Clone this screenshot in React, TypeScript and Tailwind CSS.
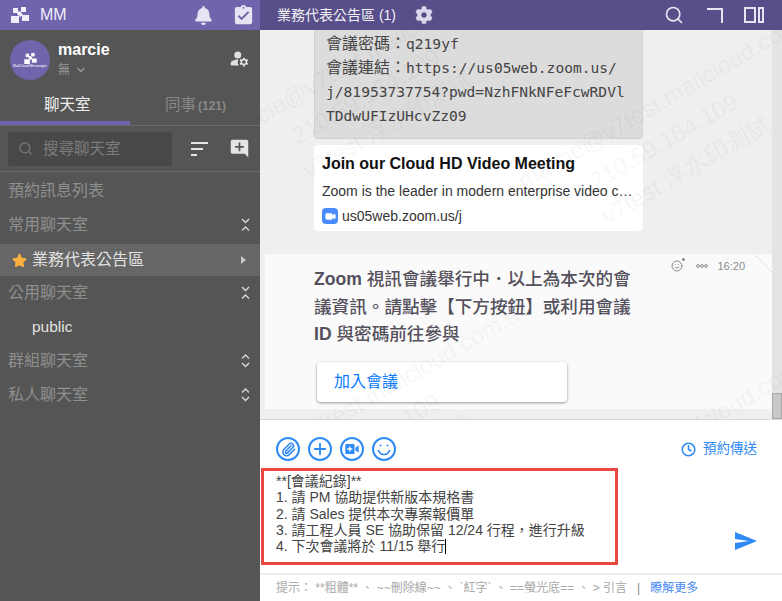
import { Search, Plus, Paperclip, Video, ChevronDown, Clock, Smile } from "lucide-react";
import { FaBell, FaCog, FaStar } from "react-icons/fa";
import { MdAddComment, MdAssignmentTurnedIn, MdManageAccounts } from "react-icons/md";

const Logo = ({ className }: { className: string }) => (
  <svg viewBox="0 0 18 16" className={className} fill="currentColor">
    <rect x="0" y="9" width="8" height="7" />
    <rect x="11" y="8" width="7" height="6" />
    <rect x="2" y="1" width="5" height="5" />
    <rect x="10" y="0" width="5" height="5" />
    <path d="M6 5l3-1 3 4-3 2-3-3z" />
  </svg>
);

const Watermark = ({ className }: { className: string }) => (
  <div
    className={`pointer-events-none absolute origin-[0_18px] -rotate-[30deg] whitespace-nowrap text-[24px] leading-[36px] text-black/[0.05] ${className}`}
  >
    <div>marcie@v7test.mailcloud.com.tw</div>
    <div className="pl-[62px]">210.59.164.109</div>
    <div className="pl-[55px]">v7test 浮水印測試</div>
  </div>
);

const Section = ({ title, open }: { title: string; open?: boolean }) => (
  <div className="flex h-[34px] items-center justify-between pl-2 pr-[10px] text-[16px] text-[#8f8f8f]">
    <span>{title}</span>
    <svg viewBox="0 0 9 14" className="h-[14px] w-[9px] text-[#d8d8d8]" fill="none" stroke="currentColor" strokeWidth="1.4">
      <path d={open ? "M1 1l3.5 3.5L8 1M1 12.5L4.5 9 8 12.5" : "M1 4.5L4.5 1 8 4.5M1 9l3.5 3.5L8 9"} />
    </svg>
  </div>
);

const Sidebar = () => (
  <aside className="flex w-[260px] shrink-0 flex-col bg-[#555555]">
    <div className="flex h-[30px] items-center justify-between bg-[#7064ad] pl-[11px] pr-[5px]">
      <div className="flex items-center gap-[11px] text-[#f0eef8]">
        <Logo className="h-[16px] w-[18px]" />
        <span className="text-[16px] font-medium">MM</span>
      </div>
      <div className="flex items-center gap-[19px] text-[#e6e3f2]">
        <FaBell className="size-[19px]" />
        <MdAssignmentTurnedIn className="size-[23px]" />
      </div>
    </div>

    <div className="flex h-[60px] items-start pl-[10px] pr-[10px] pt-[10px]">
      <div className="flex size-[40px] flex-col items-center justify-center rounded-full bg-[#7064ad] text-white">
        <Logo className="mt-[2px] h-[11px] w-[13px]" />
        <span className="mt-[1px] text-[3.5px] leading-none">MailCloud Messenger</span>
      </div>
      <div className="ml-[8px] flex-1">
        <div className="text-[16px] font-bold leading-[20px] text-white">marcie</div>
        <div className="mt-[2px] flex items-center gap-[5px] text-[12px] leading-[16px] text-[#9a9a9a]">
          無 <ChevronDown className="size-[12px]" strokeWidth={2.5} />
        </div>
      </div>
      <MdManageAccounts className="mt-[8px] size-[21px] text-[#e0e0e0]" />
    </div>

    <div className="flex h-[36px] border-b border-[#6a6a6a]">
      <div className="w-[130px] border-b-[4px] border-[#7064ad] pl-[44px] pt-[3px] text-[15.5px] leading-[24px] text-[#eeeeee]">
        聊天室
      </div>
      <div className="pl-[35px] pt-[3px] text-[15.5px] leading-[24px] text-[#888888]">
        同事<span className="ml-[2px] text-[12px] font-bold">(121)</span>
      </div>
    </div>

    <div className="flex h-[46px] items-center border-b border-[#6a6a6a] pl-2">
      <div className="flex h-[34px] w-[164px] items-center gap-[10px] rounded-[3px] bg-[#484848] pl-[10px] text-[15.5px] text-[#7b7b7b]">
        <Search className="size-[15px]" />
        <span>搜尋聊天室</span>
      </div>
      <svg viewBox="0 0 18 14" className="ml-[19px] h-[14px] w-[18px] text-[#e4e4e4]" fill="currentColor">
        <rect x="0" y="0" width="17" height="2" />
        <rect x="0" y="6" width="12" height="2" />
        <rect x="0" y="12" width="6" height="2" />
      </svg>
      <MdAddComment className="ml-[20px] size-[21px] text-[#e4e4e4]" />
    </div>

    <div className="mt-[2px] flex h-[34px] items-center pl-2 text-[16px] text-[#8f8f8f]">預約訊息列表</div>
    <Section title="常用聊天室" open />
    <div className="mt-[2px] flex h-[32px] items-center justify-between bg-[#666666] pl-[12px] pr-[14px] text-[16px] text-[#e2e2e2]">
      <span className="flex items-center gap-[5px]">
        <FaStar className="size-[15px] text-[#fcb040]" />
        業務代表公告區
      </span>
      <span className="border-y-[4px] border-l-[5px] border-y-transparent border-l-[#c8c8c8]" />
    </div>
    <Section title="公用聊天室" open />
    <div className="flex h-[34px] items-center pl-[32px] text-[15.5px] text-[#e2e2e2]">public</div>
    <Section title="群組聊天室" />
    <Section title="私人聊天室" />
  </aside>
);

const Header = () => (
  <header className="flex h-[30px] items-center justify-between bg-[#584e8a] pl-[17px] pr-[18px] text-white">
    <div className="flex items-center gap-[19px]">
      <span className="text-[14px] text-[#f2f2f2]">業務代表公告區 (1)</span>
      <FaCog className="size-[18px] text-[#dcd9ec]" />
    </div>
    <div className="flex items-center text-[#e6e4f0]">
      <Search className="size-[20px]" strokeWidth={2} />
      <svg viewBox="0 0 16 16" className="ml-[23px] size-[16px]" fill="none" stroke="currentColor" strokeWidth="2">
        <path d="M0 2h15v15" />
      </svg>
      <svg viewBox="0 0 20 16" className="ml-[21px] h-[16px] w-[20px]" fill="none" stroke="currentColor" strokeWidth="2">
        <rect x="1" y="1" width="10" height="14" />
        <rect x="15" y="1" width="4" height="14" />
      </svg>
    </div>
  </header>
);

const Messages = () => (
  <div className="relative flex min-h-0 flex-1 overflow-hidden border-b border-[#d8d8d8] bg-[#efefef]">
    <div className="flex-1 pl-[5px]">
      <div className="ml-[49px] w-[329px] rounded-b-[4px] border-x border-b border-[#d2d2d2] bg-[#dcdcdc] pb-[10px] pl-[11px] pt-[2px] text-[#444444]">
        <div className="text-[16px] leading-[24px]">
          會議密碼：<span className="font-['DejaVu_Sans_Mono',monospace] text-[14.6px]">q219yf</span>
        </div>
        <div className="text-[16px] leading-[24px]">
          會議連結：<span className="font-['DejaVu_Sans_Mono',monospace] text-[14.6px]">https://us05web.zoom.us/</span>
        </div>
        <div className="font-['DejaVu_Sans_Mono',monospace] text-[14.6px] leading-[24px]">
          j/81953737754?pwd=NzhFNkNFeFcwRDVl
        </div>
        <div className="font-['DejaVu_Sans_Mono',monospace] text-[14.6px] leading-[24px]">TDdwUFIzUHcvZz09</div>
      </div>

      <div className="ml-[49px] mt-[6px] flex h-[86px] w-[329px] flex-col rounded-[4px] bg-white px-[8px] pt-[9px]">
        <div className="text-[16px] font-bold leading-[20px] text-[#111111]">Join our Cloud HD Video Meeting</div>
        <div className="mt-[7px] truncate text-[14px] leading-[20px] text-[#333333]">
          Zoom is the leader in modern enterprise video communications
        </div>
        <div className="mt-[5px] flex items-center gap-[4px] text-[14px] leading-[20px] text-[#333333]">
          <span className="flex size-[16px] items-center justify-center rounded-[4px] bg-[#4a8cff]">
            <Video className="size-[11px] fill-white text-white" />
          </span>
          us05web.zoom.us/j
        </div>
      </div>

      <div className="relative mt-[23px] h-[155px] bg-[#fafafa] pl-[49px] pt-[12px]">
        <div className="w-[330px] text-[17.6px] font-medium leading-[27.5px] text-[#54505c]">
          <span className="font-bold">Zoom</span> 視訊會議舉行中．以上為本次的會議資訊。請點擊【下方按鈕】或利用會議{" "}
          <span className="font-bold">ID</span> 與密碼前往參與
        </div>
        <div className="ml-[3px] mt-[13px] flex h-[40px] w-[250px] items-center rounded-[4px] bg-white pl-[17px] text-[16px] text-[#0a7cff] shadow-[0_1px_3px_rgba(0,0,0,0.4)]">
          加入會議
        </div>
        <div className="absolute right-[27px] top-[5px] flex items-center text-[11px] leading-[14px] text-[#8a8a8a]">
          <span className="relative">
            <Smile className="size-[12px]" />
            <span className="absolute -right-[2px] -top-[2px] size-[3px] rounded-full bg-[#8a8a8a]" />
          </span>
          <svg viewBox="0 0 12 4" className="ml-[13px] h-[4px] w-[12px]" fill="none" stroke="currentColor">
            <circle cx="2" cy="2" r="1.4" />
            <circle cx="6" cy="2" r="1.4" />
            <circle cx="10" cy="2" r="1.4" />
          </svg>
          <span className="ml-[9px]">16:20</span>
        </div>
        <svg viewBox="0 0 18 18" className="absolute right-0 top-0 size-[18px] text-[#bdbdbd]" fill="none" stroke="currentColor" strokeDasharray="1 2">
          <path d="M0 0l18 18" />
        </svg>
      </div>
    </div>

    <div className="flex w-[10px] shrink-0 flex-col justify-end bg-[#e4e4e4]">
      <div className="h-[26px] border border-[#a8a8a8] bg-[#c8c8c8]" />
    </div>

    <Watermark className="-left-[38px] top-[90px]" />
    <Watermark className="left-[260px] top-[135px]" />
    <Watermark className="-left-[38px] top-[435px]" />
    <Watermark className="left-[260px] top-[480px]" />
  </div>
);

const ToolButton = ({ children }: { children: React.ReactNode }) => (
  <span className="flex size-[24px] items-center justify-center rounded-full border-2 border-[#2f8af5] text-[#2f8af5]">
    {children}
  </span>
);

const Composer = () => (
  <div className="flex h-[181px] flex-col bg-white">
    <div className="flex h-[41px] shrink-0 items-end justify-between pl-[16px] pr-[25px]">
      <div className="flex gap-[8px]">
        <ToolButton>
          <Paperclip className="size-[15px]" strokeWidth={2.5} />
        </ToolButton>
        <ToolButton>
          <Plus className="size-[18px]" strokeWidth={2.5} />
        </ToolButton>
        <ToolButton>
          <svg viewBox="0 0 16 12" className="h-[10px] w-[14px]" fill="currentColor">
            <path fillRule="evenodd" d="M1 0h9a1 1 0 011 1v10a1 1 0 01-1 1H1a1 1 0 01-1-1V1a1 1 0 011-1zm3.5 3v2.2H2.3v1.6h2.2V9h1.6V6.8h2.2V5.2H6.1V3z" />
            <path d="M12 4.5L16 1.5v9l-4-3z" />
          </svg>
        </ToolButton>
        <ToolButton>
          <svg viewBox="0 0 20 20" className="size-[20px]" fill="none" stroke="currentColor" strokeWidth="1.6">
            <path d="M4.5 11.5c1.2 3 3 4 5.5 4s4.3-1 5.5-4" strokeLinecap="round" />
            <circle cx="6.5" cy="6.5" r="1" fill="currentColor" stroke="none" />
            <circle cx="13.5" cy="6.5" r="1" fill="currentColor" stroke="none" />
          </svg>
        </ToolButton>
      </div>
      <div className="mb-[2px] flex items-center gap-[7px] text-[13.5px] leading-[20px] text-[#2f8af5]">
        <Clock className="size-[15px]" strokeWidth={2.5} />
        預約傳送
      </div>
    </div>

    <div className="mt-[7px] flex h-[97px] shrink-0 items-end">
      <div className="ml-px h-[97px] w-[357px] border-[3px] border-[#e8483f] pl-[12px] pt-[2px] text-[14px] leading-[16.3px] text-[#444444]">
        <div>**[會議紀錄]**</div>
        <div>1. 請 PM 協助提供新版本規格書</div>
        <div>2. 請 Sales 提供本次專案報價單</div>
        <div>3. 請工程人員 SE 協助保留 12/24 行程，進行升級</div>
        <div className="flex items-center">
          4. 下次會議將於 11/15 舉行<span className="h-[15px] w-px bg-black" />
        </div>
      </div>
      <svg viewBox="0 0 22 18" className="mb-[15px] ml-[117px] h-[18px] w-[22px] text-[#2f8af5]" fill="currentColor">
        <path d="M0 0l22 9L0 18l0-7 14-2L0 7z" />
      </svg>
    </div>

    <div className="mt-[8px] flex flex-1 items-center gap-[10px] border-t-2 border-[#eeeeee] pl-[16px] text-[12px] text-[#a8a8a8]">
      <span>提示： **粗體** 、 ~~刪除線~~ 、 `紅字` 、 ==螢光底== 、 &gt; 引言</span>
      <span className="text-[#888888]">|</span>
      <span className="text-[#4a8cf0]">瞭解更多</span>
    </div>
  </div>
);

export default function App() {
  return (
    <div className="flex h-[601px] w-[782px] overflow-hidden font-['Liberation_Sans','Noto_Sans_CJK_TC',sans-serif]">
      <Sidebar />
      <main className="flex min-w-0 flex-1 flex-col">
        <Header />
        <Messages />
        <Composer />
      </main>
    </div>
  );
}
